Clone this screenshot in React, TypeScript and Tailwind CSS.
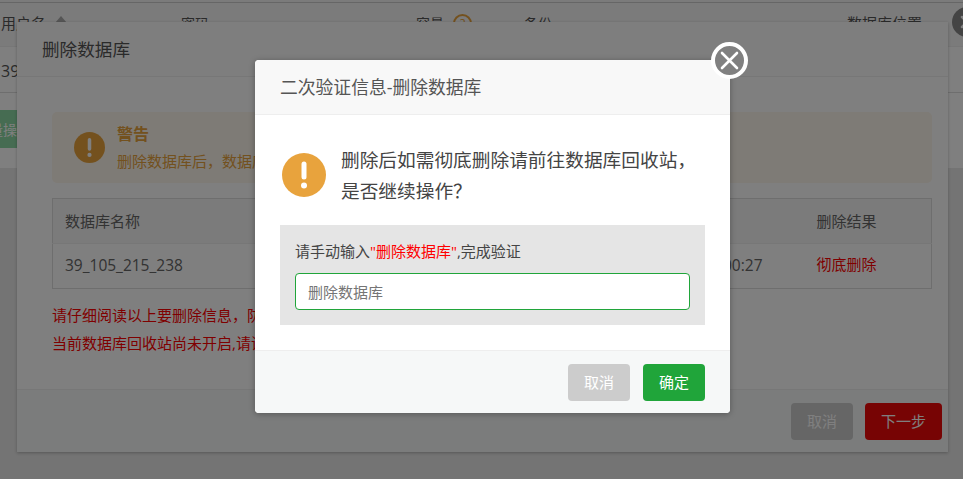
import { X } from 'lucide-react'

const FONT = "font-['Open_Sans','Noto_Sans_CJK_SC',sans-serif]"

function WarnIcon({ className }: { className: string }) {
  return (
    <svg viewBox="0 0 44 44" className={className}>
      <circle cx="22" cy="22" r="22" fill="#e8a33d" />
      <rect x="19.5" y="8.5" width="5" height="18" rx="2.5" fill="#fff" />
      <circle cx="22" cy="32.5" r="3" fill="#fff" />
    </svg>
  )
}

// page behind the first dialog, only the edges show
function BackgroundPage() {
  return (
    <div className="h-full w-full bg-[#e8e8e8] text-[14px] text-[#555]">
      <div className="h-[3px] border-b border-[#ccc] bg-[#f6f6f6]" />
      <div className="flex h-[44px] items-center border-b border-[#eee] bg-[#f6f6f6] pb-[2px]">
        <div className="flex w-[181px] items-center gap-[9px] pl-[1px] text-[15px]">
          用户名
          <span className="mb-[8px] h-0 w-0 border-x-[6px] border-b-[7px] border-x-transparent border-b-[#aaa]" />
        </div>
        <div className="w-[235px]">密码</div>
        <div className="flex w-[108px] items-center gap-[9px]">
          容量
          <span className="flex h-[19px] w-[19px] items-center justify-center rounded-full border-2 border-[#e8a33d] text-[12px] text-[#e8a33d]">?</span>
        </div>
        <div className="w-[323px]">备份</div>
        <div className="text-[15px]">数据库位置</div>
      </div>
      <div className="flex h-[46px] items-center border-b border-[#ddd] bg-white pl-[1px] pt-[2px] text-[16px]">39_105_215_238</div>
      <div className="flex h-[75px] items-start bg-white pt-[17px]">
        <div className="flex h-[38px] w-[60px] items-center overflow-hidden bg-[#8cd8a4] text-white">
          <span className="-ml-[25px] whitespace-nowrap">批量操作</span>
        </div>
      </div>
    </div>
  )
}

function DeleteDialog() {
  return (
    <div className="absolute left-[17px] top-[22px] flex h-[430px] w-[931px] flex-col bg-white shadow-[0_1px_3px_rgba(0,0,0,0.25)]">
      <div className="flex h-[55px] shrink-0 items-center border-b border-[#eee] bg-[#fdfdfd] pl-[25px] text-[17.6px] text-[#555]">删除数据库</div>
      <div className="flex-1 px-[35px] pt-[35px]">
        <div className="flex h-[71px] w-[880px] items-center rounded-[5px] bg-[#fdf6ec] pl-[22px]">
          <WarnIcon className="h-[31px] w-[31px]" />
          <div className="mb-[2px] ml-[12px]">
            <div className="text-[16px] font-bold leading-[22px] text-[#e6a23c]">警告</div>
            <div className="mt-[6px] text-[15px] leading-[20px] text-[#e6a23c]">删除数据库后，数据库将进入回收站</div>
          </div>
        </div>
        <table className="mt-[15px] w-[880px] border border-[#ddd] text-[15px] text-[#666]">
          <tbody>
            <tr className="h-[45px] border-b border-[#eee] bg-[#f6f6f6]">
              <td className="pl-[12px]">数据库名称</td>
              <td></td>
              <td className="w-[127px] pl-[12px]">删除结果</td>
            </tr>
            <tr className="h-[45px]">
              <td className="pl-[12px] text-[15.5px]">39_105_215_238</td>
              <td className="pr-[42px] text-right text-[15.5px]">10:00:27</td>
              <td className="w-[127px] pb-[3px] pl-[12px] text-[#f00]">彻底删除</td>
            </tr>
          </tbody>
        </table>
        <p className="mt-[16px] text-[15px] leading-[20px] text-[#f00]">请仔细阅读以上要删除信息，防止数据库被误删</p>
        <p className="mt-[8px] text-[15px] leading-[20px] text-[#f00]">当前数据库回收站尚未开启,请谨慎操作</p>
      </div>
      <div className="flex h-[63px] shrink-0 items-center justify-end gap-[12px] border-t border-[#eee] bg-[#f6f8f8] pr-[6px]">
        <button className="h-[37px] w-[62px] rounded-[4px] bg-[#ccc] text-[15px] text-white">取消</button>
        <button className="h-[37px] w-[77px] rounded-[4px] bg-[#ef0808] text-[15px] text-white">下一步</button>
      </div>
    </div>
  )
}

function VerifyDialog() {
  return (
    <div className="absolute left-[255px] top-[60px] flex h-[353px] w-[475px] flex-col rounded-[4px] bg-white shadow-[0_1px_6px_rgba(0,0,0,0.3)]">
      <div className="flex h-[55px] shrink-0 items-center rounded-t-[4px] border-b border-[#eee] bg-[#f8f8f8] pl-[25px] text-[17.8px] text-[#555]">
        二次验证信息-删除数据库
      </div>
      <div className="flex-1 px-[25px]">
        <div className="mt-[29px] flex items-center gap-[15px] pl-[2px]">
          <WarnIcon className="h-[44px] w-[44px] shrink-0" />
          <div className="text-[18.7px] leading-[31px] text-[#444]">
            删除后如需彻底删除请前往数据库回收站，
            <br />
            是否继续操作？
          </div>
        </div>
        <div className="mt-[19px] h-[100px] bg-[#e5e5e5] px-[15px] pt-[16px]">
          <div className="text-[15px] leading-[20px] text-[#444]">
            请手动输入<span className="text-[#f00]">"删除数据库"</span>,完成验证
          </div>
          <input
            readOnly
            placeholder="删除数据库"
            className="mt-[12px] h-[37px] w-[395px] rounded-[4px] border border-[#20a53a] bg-white px-[12px] text-[15px] outline-none placeholder:text-[#757575]"
          />
        </div>
      </div>
      <div className="flex h-[63px] shrink-0 items-center justify-end gap-[13px] rounded-b-[4px] border-t border-[#eee] bg-[#f6f8f8] pr-[25px]">
        <button className="h-[37px] w-[62px] rounded-[4px] bg-[#ccc] text-[15px] text-white">取消</button>
        <button className="h-[37px] w-[62px] rounded-[4px] bg-[#20a53a] text-[15px] text-white">确定</button>
      </div>
      <div className="absolute right-[-18px] top-[-18px] flex h-[37px] w-[37px] items-center justify-center rounded-full border-[4px] border-white bg-[#808080]">
        <svg viewBox="0 0 29 29" className="h-[29px] w-[29px]">
          <path d="M7 7 L22 22 M22 7 L7 22" stroke="#fff" strokeWidth="2.6" strokeLinecap="round" fill="none" />
        </svg>
      </div>
    </div>
  )
}

export default function App() {
  return (
    <div className={`relative h-[479px] w-[963px] overflow-hidden ${FONT}`}>
      <BackgroundPage />
      <DeleteDialog />
      <div className="absolute right-[-19px] top-[7px] flex h-[30px] w-[30px] items-center justify-center rounded-full bg-[#888]">
        <X className="h-[20px] w-[20px] text-white" strokeWidth={3} />
      </div>
      <div className="absolute inset-0 bg-black/50" />
      <VerifyDialog />
    </div>
  )
}
